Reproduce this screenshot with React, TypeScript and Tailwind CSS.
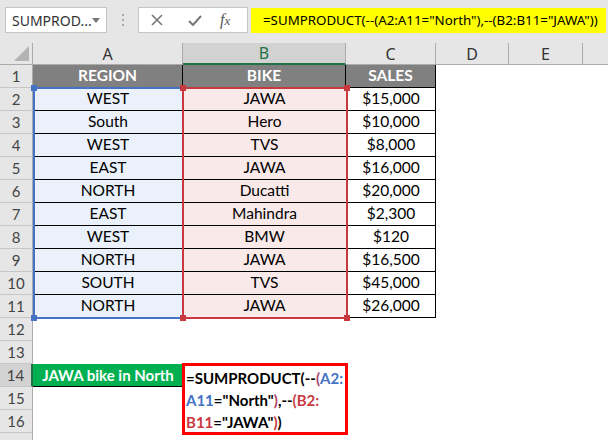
import React from 'react';

const DATA: [string, string, string][] = [
  ['WEST', 'JAWA', '$15,000'],
  ['South', 'Hero', '$10,000'],
  ['WEST', 'TVS', '$8,000'],
  ['EAST', 'JAWA', '$16,000'],
  ['NORTH', 'Ducatti', '$20,000'],
  ['EAST', 'Mahindra', '$2,300'],
  ['WEST', 'BMW', '$120'],
  ['NORTH', 'JAWA', '$16,500'],
  ['SOUTH', 'TVS', '$45,000'],
  ['NORTH', 'JAWA', '$26,000'],
];

const BLUE = '#4472c4';

function RowHead({ n, selected, hideLabel }: { n: number; selected?: boolean; hideLabel?: boolean }) {
  return (
    <div
      className={
        selected
          ? 'w-[33px] shrink-0 flex items-center justify-center bg-[#d2d2d2] border-b border-[#c6c6c6] border-r-2 border-r-[#217346] text-[15px] text-[#444]'
          : 'w-[33px] shrink-0 flex items-center justify-center bg-[#e6e6e6] border-b border-[#c6c6c6] border-r border-r-[#ababab] text-[15px] text-[#444]'
      }
    >
      {hideLabel ? null : n}
    </div>
  );
}

export default function App() {
  return (
    <div className="relative w-[608px] h-[440px] overflow-hidden bg-white font-['Lato',sans-serif] text-black">
      {/* formula bar */}
      <div className="h-[43px] bg-[#e6e6e6] flex items-start pt-[7px] font-['Noto_Sans',sans-serif]">
        <div className="ml-[5px] w-[102px] h-[26px] bg-white border border-[#c6c6c6] flex items-center pl-[6px] pr-[6px] text-[14px] text-[#333]">
          <span className="flex-1">SUMPROD...</span>
          <svg width="8" height="5" viewBox="0 0 8 5"><path d="M0 0h8L4 5z" fill="#777" /></svg>
        </div>
        <div className="w-[31px] h-[26px] flex flex-col items-center justify-center gap-[3px]">
          <span className="w-[2px] h-[2px] bg-[#aaa]" />
          <span className="w-[2px] h-[2px] bg-[#aaa]" />
          <span className="w-[2px] h-[2px] bg-[#aaa]" />
        </div>
        <div className="w-[110px] h-[26px] bg-white border border-[#c6c6c6] flex items-center">
          <svg className="ml-[12px]" width="12" height="12" viewBox="0 0 12 12"><path d="M1 1l10 10M11 1L1 11" stroke="#777" strokeWidth="1.6" /></svg>
          <svg className="ml-[25px]" width="14" height="11" viewBox="0 0 14 11"><path d="M1 6l4 4L13 1" stroke="#777" strokeWidth="2" fill="none" /></svg>
          <span className="ml-[18px] font-['Liberation_Serif',serif] italic text-[16px] text-[#555]">f<span className="text-[13px]">x</span></span>
        </div>
        <div className="ml-[3px] w-[355px] h-[25px] mt-[1px] bg-[#ffff00] flex items-center pl-[12px] text-[13.3px] whitespace-nowrap">
          =SUMPRODUCT(--(A2:A11="North"),--(B2:B11="JAWA"))
        </div>
      </div>

      {/* column headers */}
      <div className="flex h-[22px] bg-[#e6e6e6] text-[16px] font-['Noto_Sans',sans-serif] text-[#333]">
        <div className="w-[33px] shrink-0 relative border-r border-b border-[#ababab]">
          <svg className="absolute right-[3px] bottom-[3px]" width="15" height="15" viewBox="0 0 15 15"><path d="M15 0V15H0z" fill="#b4b4b4" /></svg>
        </div>
        <div className="w-[150px] shrink-0 flex items-center justify-center border-r border-b border-[#ababab]">A</div>
        <div className="w-[163px] shrink-0 flex items-center justify-center bg-[#d2d2d2] border-r border-[#ababab] border-b-2 border-b-[#217346] text-[#217346]">B</div>
        <div className="w-[90px] shrink-0 flex items-center justify-center border-r border-b border-[#ababab]">C</div>
        <div className="w-[73px] shrink-0 flex items-center justify-center border-r border-b border-[#ababab]">D</div>
        <div className="w-[74px] shrink-0 flex items-center justify-center border-r border-b border-[#ababab]">E</div>
        <div className="flex-1 border-b border-[#ababab]" />
      </div>

      {/* row 1 */}
      <div className="flex h-[23px] text-[15.5px]">
        <RowHead n={1} />
        <div className="w-[150px] shrink-0 flex items-center justify-center bg-[#808080] text-white font-bold border-r border-b border-black">REGION</div>
        <div className="w-[163px] shrink-0 flex items-center justify-center bg-[#808080] text-white font-bold border-r border-b border-black">BIKE</div>
        <div className="w-[90px] shrink-0 flex items-center justify-center bg-[#808080] text-white font-bold border-r border-b border-black">SALES</div>
      </div>

      {DATA.map(([region, bike, sales], i) => (
        <div key={i} className="flex h-[23px] text-[15.5px]">
          <RowHead n={i + 2} />
          <div className="w-[150px] shrink-0 flex items-center justify-center bg-[#eaf1fb] border-b border-black">{region}</div>
          <div className="w-[163px] shrink-0 flex items-center justify-center bg-[#f9e9e9] border-b border-black">{bike}</div>
          <div className="w-[90px] shrink-0 flex items-center justify-center border-l border-r border-b border-black">{sales}</div>
        </div>
      ))}

      {[12, 13, 14, 15, 16, 17].map((n) => (
        <div key={n} className="flex h-[23px] text-[15px]">
          <RowHead n={n} selected={n === 14} hideLabel={n === 17} />
          {n === 14 && (
            <div className="w-[150px] shrink-0 flex items-center justify-center bg-[#00b050] text-white font-bold border-b border-black">
              JAWA bike in North
            </div>
          )}
        </div>
      ))}

      {/* range highlights from the formula being edited */}
      <div className="absolute left-[33px] top-[87px] w-[151px] h-[232px] border-2 border-[#4472c4] pointer-events-none" />
      <div className="absolute left-[31px] top-[85px] w-[6px] h-[6px] bg-[#4472c4]" />
      <div className="absolute left-[31px] top-[315px] w-[6px] h-[6px] bg-[#4472c4]" />
      <div className="absolute left-[182px] top-[87px] w-[166px] h-[232px] border-2 border-[#c8393f] pointer-events-none" />
      <div className="absolute left-[180px] top-[85px] w-[6px] h-[6px] bg-[#c8393f]" />
      <div className="absolute left-[344px] top-[85px] w-[6px] h-[6px] bg-[#c8393f]" />
      <div className="absolute left-[180px] top-[315px] w-[6px] h-[6px] bg-[#c8393f]" />
      <div className="absolute left-[344px] top-[315px] w-[6px] h-[6px] bg-[#c8393f]" />

      {/* cell being edited */}
      <div className="absolute left-[182px] top-[363px] w-[166px] h-[72px] border-[3px] border-[#ff0000] bg-white pl-[1px] pt-[1px] text-[15px] font-bold leading-[22px]">
        <div>=SUMPRODUCT(--<span className="text-[#b0406a]">(</span><span style={{ color: BLUE }}>A2:</span></div>
        <div><span style={{ color: BLUE }}>A11</span>="North"<span className="text-[#b0406a]">)</span>,--<span className="text-[#c8393f]">(B2:</span></div>
        <div><span className="text-[#c8393f]">B11</span>="JAWA"<span className="text-[#c8393f]">)</span>)</div>
      </div>
    </div>
  );
}
